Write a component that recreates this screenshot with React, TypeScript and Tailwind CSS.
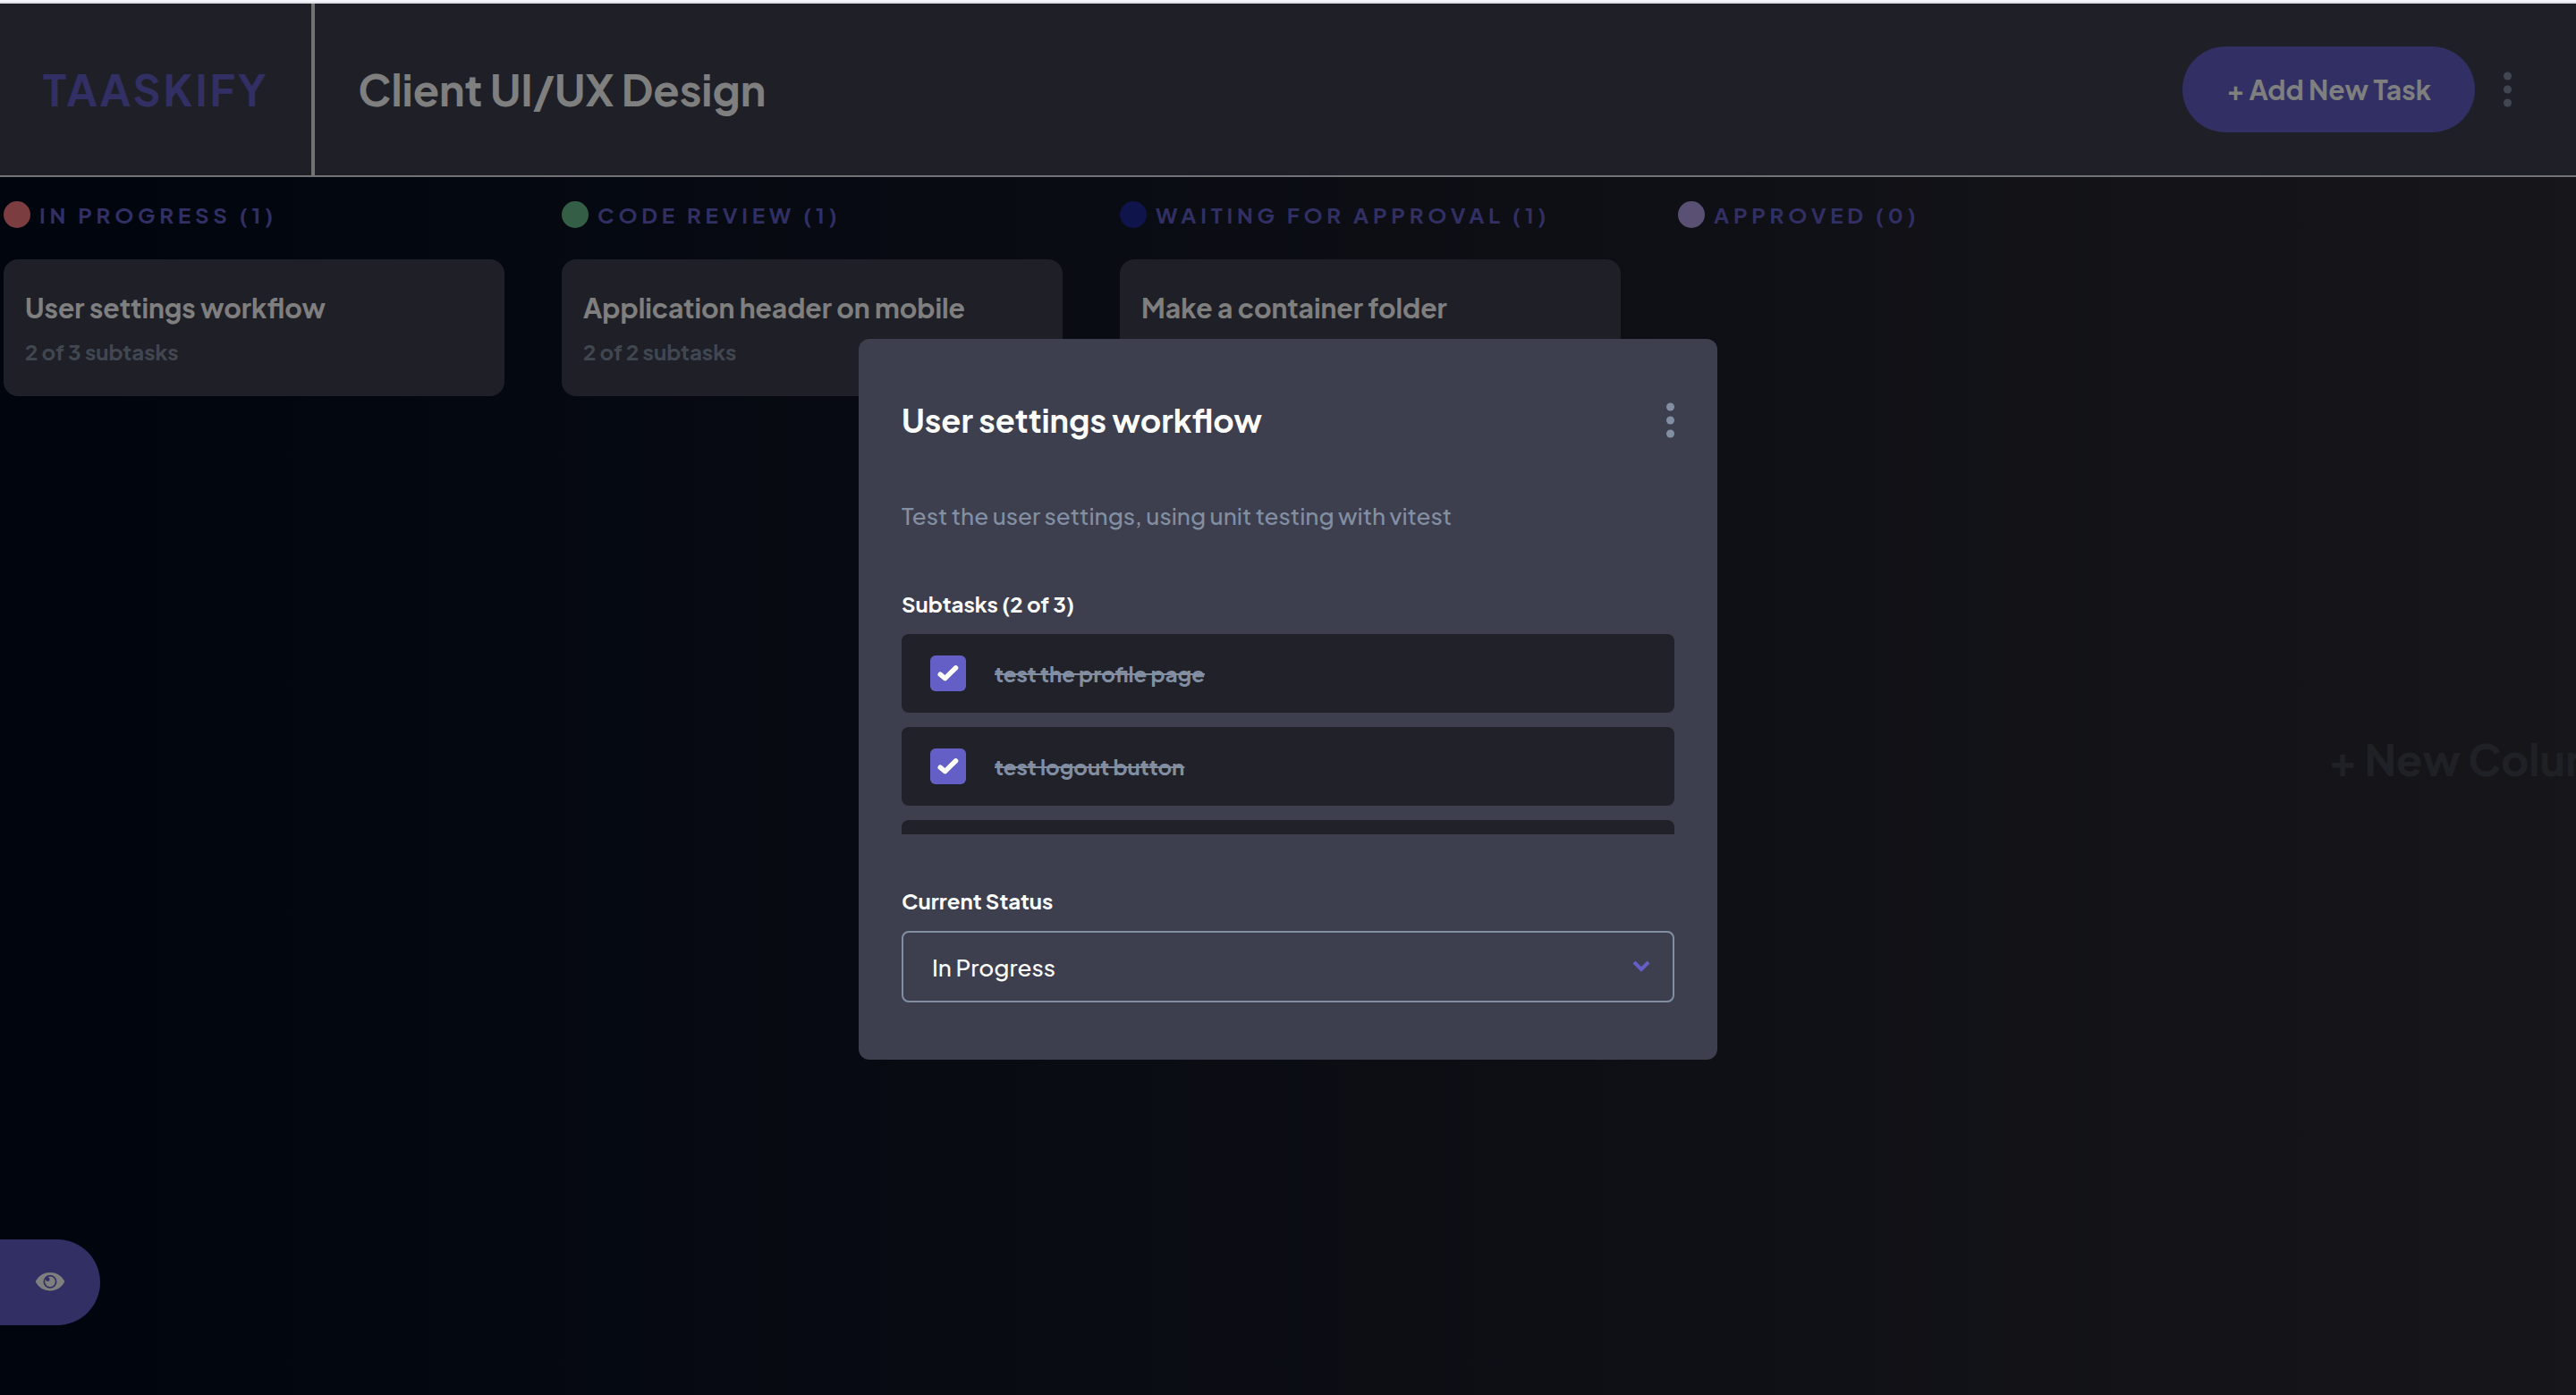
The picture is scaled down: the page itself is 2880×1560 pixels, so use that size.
import React from "react";

type Task = { title: string; done: number; total: number };
type Column = { name: string; dot: string; tasks: Task[] };

const columns: Column[] = [
  { name: "In Progress", dot: "bg-[#f87b80]", tasks: [{ title: "User settings workflow", done: 2, total: 3 }] },
  { name: "Code Review", dot: "bg-[#68bd8b]", tasks: [{ title: "Application header on mobile", done: 2, total: 2 }] },
  { name: "Waiting for Approval", dot: "bg-[#1e2896]", tasks: [{ title: "Make a container folder", done: 0, total: 1 }] },
  { name: "Approved", dot: "bg-[#b3a0e8]", tasks: [] },
];

const subtasks = [
  { title: "test the profile page", done: true },
  { title: "test logout button", done: true },
  { title: "test the theme toggle", done: false },
];

function Kebab() {
  return (
    <svg viewBox="0 0 4.616 20" className="h-10 w-[9px] fill-[#828fa3]" aria-hidden="true">
      <circle cx="2.308" cy="2.308" r="2.308" />
      <circle cx="2.308" cy="10" r="2.308" />
      <circle cx="2.308" cy="17.692" r="2.308" />
    </svg>
  );
}

function Header() {
  return (
    <header className="flex h-[194px] shrink-0 items-stretch border-b-2 border-[#e6e4ec] bg-[#3e3f4e]">
      <div className="flex items-center border-r-4 border-[#e4e4e7] px-12 text-[48px] font-bold tracking-[3px] text-[#635fc7]">
        TAASKIFY
      </div>
      <h1 className="flex flex-1 items-center pl-12 text-[48px] font-bold text-white">Client UI/UX Design</h1>
      <div className="flex items-center gap-8 pr-18">
        <button type="button" className="h-24 rounded-full bg-[#635fc7] px-[49px] text-[30px] font-bold text-white">
          + Add New Task
        </button>
        <button type="button" aria-label="Board options">
          <Kebab />
        </button>
      </div>
    </header>
  );
}

function BoardColumn({ column }: { column: Column }) {
  return (
    <section className="w-[560px] shrink-0">
      <h2 className="flex items-center gap-2.5 text-[24px] leading-[30px] font-bold tracking-[0.2em] text-[#635fc7] uppercase">
        <span className={"size-[30px] rounded-full " + column.dot} />
        {column.name} ({column.tasks.length})
      </h2>
      <ul className="mt-[35px]">
        {column.tasks.map((task) => (
          <li key={task.title} className="rounded-2xl bg-[#3e3f4e] px-6 py-8">
            <h3 className="text-[30px] leading-[45px] font-bold text-white">{task.title}</h3>
            <p className="mt-2 text-[24px] leading-[36px] font-bold text-[#828fa3]">
              {task.done} of {task.total} subtasks
            </p>
          </li>
        ))}
      </ul>
    </section>
  );
}

function TaskDialog() {
  return (
    <div role="dialog" aria-labelledby="task-title" className="w-[960px] rounded-xl bg-[#3e3f4e] px-12 pt-[68px] pb-16">
      <div className="flex items-center justify-between">
        <h2 id="task-title" className="text-[36px] leading-[46px] font-bold text-white">
          User settings workflow
        </h2>
        <button type="button" aria-label="Task options">
          <Kebab />
        </button>
      </div>
      <p className="mt-16 text-[26px] leading-[40px] font-medium text-[#828fa3]">
        Test the user settings, using unit testing with vitest
      </p>
      <h3 className="mt-[60px] text-[24px] leading-[36px] font-bold text-white">Subtasks (2 of 3)</h3>
      <div className="mt-4 flex h-56 flex-col gap-4 overflow-hidden">
        {subtasks.map((subtask) => (
          <label key={subtask.title} className="flex h-[88px] shrink-0 items-center gap-8 rounded-lg bg-[#21212a] px-8">
            <span className="grid">
              <input
                type="checkbox"
                defaultChecked={subtask.done}
                className="peer col-start-1 row-start-1 size-10 appearance-none rounded-md bg-white checked:bg-[#635fc7]"
              />
              <svg
                viewBox="0 0 20 20"
                className="pointer-events-none invisible col-start-1 row-start-1 size-10 peer-checked:visible"
                aria-hidden="true"
              >
                <path
                  d="M5.6 10.6 8.3 12.8 14.3 6.9"
                  fill="none"
                  stroke="#fff"
                  strokeWidth="2.7"
                  strokeLinecap="round"
                  strokeLinejoin="round"
                />
              </svg>
            </span>
            <span className={subtask.done ? "text-[24px] font-bold text-[#828fa3] line-through" : "text-[24px] font-bold text-white"}>
              {subtask.title}
            </span>
          </label>
        ))}
      </div>
      <label htmlFor="status" className="mt-14 block text-[24px] leading-[36px] font-bold text-white">
        Current Status
      </label>
      <div className="mt-4 grid items-center">
        <select
          id="status"
          className="col-start-1 row-start-1 h-20 appearance-none rounded-lg border-2 border-[#828fa3] px-8 text-[26px] font-medium text-white"
        >
          <option>In Progress</option>
          <option>Code Review</option>
          <option>Waiting for Approval</option>
          <option>Approved</option>
        </select>
        <svg
          viewBox="0 0 10 7"
          className="pointer-events-none col-start-1 row-start-1 mr-[27px] h-3.5 w-5 justify-self-end"
          aria-hidden="true"
        >
          <path d="m1 1 4 4 4-4" fill="none" stroke="#635fc7" strokeWidth="2" />
        </svg>
      </div>
    </div>
  );
}

export default function App() {
  return (
    <div
      className="flex h-screen flex-col overflow-hidden border-t-2 border-[#f4f6fe] bg-linear-to-r/srgb from-[#000a1c] to-[#2e2c34]"
      style={{ fontFamily: '"Plus Jakarta Sans", Inter, sans-serif' }}
    >
      <div className="h-0.5 shrink-0 bg-[#dfdfe4]" />
      <Header />
      <main className="flex flex-1 gap-16 overflow-hidden pt-[27px] pl-1">
        {columns.map((column) => (
          <BoardColumn key={column.name} column={column} />
        ))}
        <button type="button" className="mb-[88px] w-[544px] shrink-0 text-[48px] font-bold text-[#41424f]">
          + New Column
        </button>
      </main>
      <button
        type="button"
        aria-label="Show sidebar"
        className="fixed bottom-[78px] left-0 flex h-24 w-28 items-center justify-center rounded-r-full bg-[#635fc7]"
      >
        <svg viewBox="0 0 16 11" className="h-[22px] w-8 fill-white" aria-hidden="true">
          <path d="M15.815 4.434A9.055 9.055 0 0 0 8 0 9.055 9.055 0 0 0 .185 4.434a1.333 1.333 0 0 0 0 1.354A9.055 9.055 0 0 0 8 10.222c3.33 0 6.25-1.777 7.815-4.434a1.333 1.333 0 0 0 0-1.354ZM8 8.89A3.776 3.776 0 0 1 4.222 5.11 3.776 3.776 0 0 1 8 1.333a3.776 3.776 0 0 1 3.778 3.778A3.776 3.776 0 0 1 8 8.89Zm2.889-3.778a2.889 2.889 0 1 1-5.438-1.36 1.19 1.19 0 1 0 1.19-1.189H6.64a2.889 2.889 0 0 1 4.25 2.549Z" />
        </svg>
      </button>
      <div className="fixed inset-x-0 top-1 bottom-0 flex items-center justify-center bg-black/50">
        <TaskDialog />
      </div>
    </div>
  );
}
